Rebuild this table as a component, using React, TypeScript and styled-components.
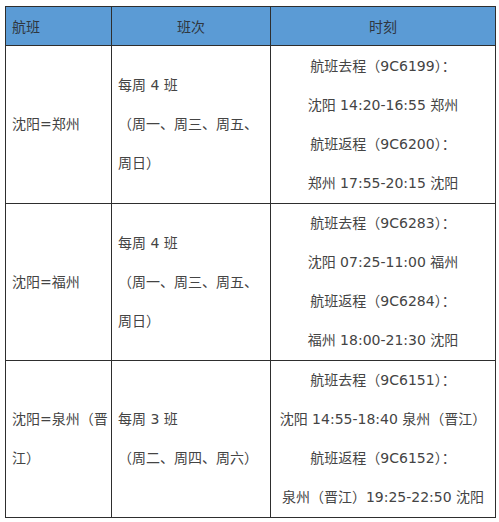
import styled, { createGlobalStyle } from "styled-components";

const GlobalStyle = createGlobalStyle`
  html, body {
    margin: 0;
    padding: 0;
    background: #ffffff;
  }
`;

const Page = styled.div`
  padding: 6px 0 0 5px;
  font-family: "DejaVu Sans", "Noto Sans CJK SC", sans-serif;
  font-size: 14px;
  color: #444444;
`;

const Table = styled.table`
  width: 490px;
  border-collapse: collapse;
  table-layout: fixed;
  border: 1px solid #2e2e2e;
`;

const HeadRow = styled.tr`
  height: 39px;
  background: #5b9bd5;
`;

const BodyRow = styled.tr<{ $h: number }>`
  height: ${(p) => p.$h}px;
`;

const HeadCell = styled.th<{ $align?: "left" | "center" }>`
  border: 1px solid #2e2e2e;
  padding: 0 6px;
  font-weight: 400;
  text-align: ${(p) => p.$align ?? "center"};
  color: #2f3640;
`;

const Cell = styled.td<{ $align?: "left" | "center" }>`
  border: 1px solid #2e2e2e;
  padding: 0 6px;
  vertical-align: middle;
  text-align: ${(p) => p.$align ?? "left"};
  line-height: 39px;
  white-space: nowrap;
`;

const Line = styled.div`
  display: block;
  color: #444444;
`;

type Row = {
  h: number;
  route: string[];
  freq: string[];
  times: string[];
};

const rows: Row[] = [
  {
    h: 158,
    route: ["沈阳=郑州"],
    freq: ["每周 4 班", "（周一、周三、周五、", "周日）"],
    times: [
      "航班去程（9C6199）：",
      "沈阳 14:20-16:55 郑州",
      "航班返程（9C6200）：",
      "郑州 17:55-20:15 沈阳",
    ],
  },
  {
    h: 157,
    route: ["沈阳=福州"],
    freq: ["每周 4 班", "（周一、周三、周五、", "周日）"],
    times: [
      "航班去程（9C6283）：",
      "沈阳 07:25-11:00 福州",
      "航班返程（9C6284）：",
      "福州 18:00-21:30 沈阳",
    ],
  },
  {
    h: 156,
    route: ["沈阳=泉州（晋", "江）"],
    freq: ["每周 3 班", "（周二、周四、周六）"],
    times: [
      "航班去程（9C6151）：",
      "沈阳 14:55-18:40 泉州（晋江）",
      "航班返程（9C6152）：",
      "泉州（晋江）19:25-22:50 沈阳",
    ],
  },
];

export default function App() {
  return (
    <Page>
      <GlobalStyle />
      <Table>
        <colgroup>
          <col style={{ width: 106 }} />
          <col style={{ width: 159 }} />
          <col style={{ width: 225 }} />
        </colgroup>
        <thead>
          <HeadRow>
            <HeadCell $align="left">航班</HeadCell>
            <HeadCell>班次</HeadCell>
            <HeadCell>时刻</HeadCell>
          </HeadRow>
        </thead>
        <tbody>
          {rows.map((r, i) => (
            <BodyRow key={i} $h={r.h}>
              <Cell>
                {r.route.map((t) => (
                  <Line key={t}>{t}</Line>
                ))}
              </Cell>
              <Cell>
                {r.freq.map((t) => (
                  <Line key={t}>{t}</Line>
                ))}
              </Cell>
              <Cell $align="center">
                {r.times.map((t) => (
                  <Line key={t}>{t}</Line>
                ))}
              </Cell>
            </BodyRow>
          ))}
        </tbody>
      </Table>
    </Page>
  );
}
